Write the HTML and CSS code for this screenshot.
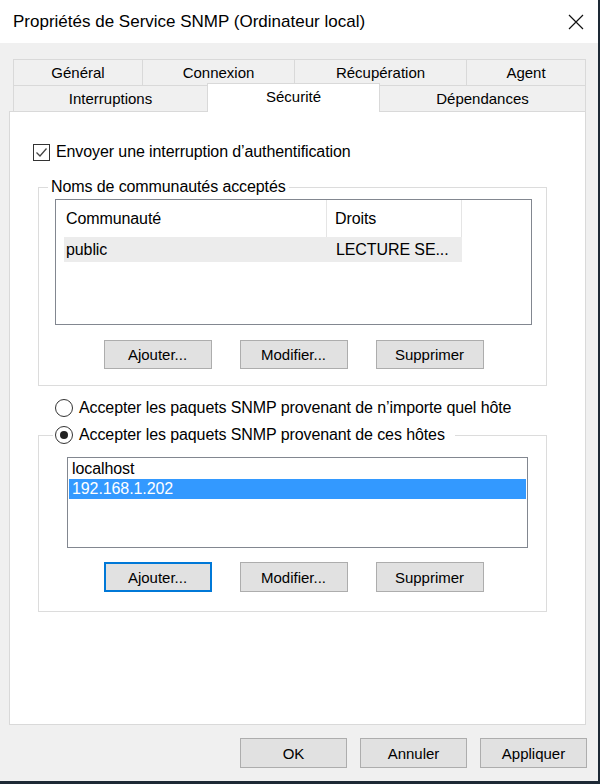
FILE: index.html
```html
<!DOCTYPE html>
<html lang="fr">
<head>
    <meta charset="UTF-8">
    <meta name="viewport" content="width=device-width, initial-scale=1.0">
    <title>Propriétés de Service SNMP</title>
    <link rel="stylesheet" href="styles.css">
</head>
<body>
    <div class="window">
        <div class="titlebar">
            <span class="title">Propriétés de Service SNMP (Ordinateur local)</span>
            <svg class="close" width="16" height="16" viewBox="0 0 16 16">
                <path d="M1 1L15 15M15 1L1 15" stroke="#111" stroke-width="1.2" fill="none"/>
            </svg>
        </div>

        <div class="content">
            <div class="tabs">
                <div class="tab-row back">
                    <div class="tab">Général</div>
                    <div class="tab">Connexion</div>
                    <div class="tab">Récupération</div>
                    <div class="tab">Agent</div>
                </div>
                <div class="tab-row front">
                    <div class="tab">Interruptions</div>
                    <div class="tab active">Sécurité</div>
                    <div class="tab">Dépendances</div>
                </div>
            </div>

            <div class="panel">
                <div class="check-row">
                    <span class="checkbox">
                        <svg width="15" height="15" viewBox="0 0 15 15">
                            <path d="M2.5 7.5L6 11L12.5 3.5" stroke="#444" stroke-width="1.3" fill="none"/>
                        </svg>
                    </span>
                    Envoyer une interruption d’authentification
                </div>

                <fieldset class="group communities">
                    <legend>Noms de communautés acceptés</legend>
                    <div class="listview">
                        <div class="lv-header">
                            <div class="col c1">Communauté</div>
                            <div class="col c2">Droits</div>
                        </div>
                        <div class="lv-row selected">
                            <div class="col c1">public</div>
                            <div class="col c2">LECTURE SE...</div>
                        </div>
                    </div>
                    <div class="btn-row">
                        <button>Ajouter...</button>
                        <button>Modifier...</button>
                        <button>Supprimer</button>
                    </div>
                </fieldset>

                <div class="radio-row">
                    <span class="radio"></span>
                    Accepter les paquets SNMP provenant de n’importe quel hôte
                </div>

                <fieldset class="group hosts">
                    <legend><span class="radio on"></span>Accepter les paquets SNMP provenant de ces hôtes</legend>
                    <div class="listbox">
                        <div class="item">localhost</div>
                        <div class="item sel">192.168.1.202</div>
                    </div>
                    <div class="btn-row">
                        <button class="focused">Ajouter...</button>
                        <button>Modifier...</button>
                        <button>Supprimer</button>
                    </div>
                </fieldset>
            </div>

            <div class="dialog-buttons">
                <button>OK</button>
                <button>Annuler</button>
                <button>Appliquer</button>
            </div>
        </div>
    </div>
</body>
</html>
```

FILE: styles.css
```css
* {
    margin: 0;
    padding: 0;
    box-sizing: border-box;
    font-family: 'Liberation Sans', Arial, sans-serif;
}

body {
    background-color: #f0f0f0;
    color: #000;
    width: 600px;
    height: 784px;
    overflow: hidden;
}

.window {
    height: 784px;
    border-right: 2px solid #1d2935;
    border-bottom: 3px solid #1d2935;
    background: #f0f0f0;
}

/* barre de titre */
.titlebar {
    height: 43px;
    background: #fff;
    display: flex;
    align-items: center;
    justify-content: space-between;
    padding: 0 14px 0 13px;
}
.titlebar .title {
    font-size: 17px;
    margin-top: 1px;
}
.close {
    margin-top: 1px;
}

.content {
    padding: 16px 12px 0 9px;
}

/* onglets */
.tabs {
    margin-left: 4px;
    font-size: 15px;
}
.tab-row {
    display: grid;
    height: 26px;
}
.tab-row.back {
    grid-template-columns: 129px 152px 172px 120px;
}
.tab-row.front {
    grid-template-columns: 194px 173px 206px;
}
.tab {
    background: #f0f0f0;
    border-top: 1px solid #d9d9d9;
    border-left: 1px solid #d9d9d9;
    text-align: center;
    line-height: 25px;
}
.tab:last-child {
    border-right: 1px solid #d9d9d9;
}
.tab.active {
    background: #fff;
    border-right: 1px solid #d9d9d9;
    margin-top: -2px;
    margin-bottom: -1px;
    line-height: 25px;
    position: relative;
    z-index: 1;
}
.tab.active + .tab {
    border-left: none;
}

.panel {
    height: 614px;
    background: #fff;
    border: 1px solid #d9d9d9;
    padding-top: 30px;
    font-size: 16px;
    letter-spacing: -0.1px;
}

/* case a cocher */
.check-row {
    display: flex;
    align-items: center;
    height: 20px;
    margin-left: 23px;
}
.checkbox {
    width: 17px;
    height: 17px;
    border: 1px solid #333;
    background: #fff;
    margin-right: 6px;
    display: flex;
    align-items: center;
    justify-content: center;
}

/* cadres */
.group {
    margin-left: 28px;
    width: 509px;
    border: 1px solid #dcdcdc;
    padding: 2px 14px 16px 16px;
}
.group legend {
    height: 20px;
    line-height: 20px;
    margin-left: -7px;
    padding: 0 3px;
}
.communities {
    margin-top: 15px;
}

.listview {
    height: 126px;
    border: 1px solid #828790;
}
.lv-header {
    display: flex;
    height: 37px;
    line-height: 37px;
}
.lv-header .c1 {
    width: 271px;
    padding-left: 10px;
    border-right: 1px solid #e5e5e5;
}
.lv-header .c2 {
    width: 135px;
    padding-left: 8px;
    border-right: 1px solid #e5e5e5;
}
.lv-row {
    display: flex;
    margin-left: 8px;
    width: 398px;
    height: 25px;
    line-height: 26px;
}
.lv-row.selected {
    background: #ececec;
}
.lv-row .c1 {
    width: 263px;
    padding-left: 2px;
}
.lv-row .c2 {
    width: 135px;
    padding-left: 9px;
}

.btn-row {
    display: flex;
    justify-content: center;
    gap: 28px;
    margin-top: 15px;
}

button {
    width: 108px;
    height: 29px;
    background: #e1e1e1;
    border: 1px solid #adadad;
    font-size: 15px;
    color: #000;
}
button.focused {
    border: 2px solid #0078d7;
}

/* boutons radio */
.radio-row {
    display: flex;
    align-items: center;
    height: 20px;
    margin: 12px 0 0 45px;
}
.radio {
    display: inline-block;
    flex: none;
    width: 18px;
    height: 18px;
    border: 1px solid #333;
    border-radius: 50%;
    background: #fff;
    margin-right: 6px;
    position: relative;
}
.radio.on::after {
    content: "";
    position: absolute;
    left: 4px;
    top: 4px;
    width: 8px;
    height: 8px;
    border-radius: 50%;
    background: #222;
}

.hosts {
    margin-top: 7px;
    padding-bottom: 19px;
}
.hosts legend {
    margin-left: -2px;
    padding: 0 10px 0 2px;
    display: flex;
    align-items: center;
}
.hosts .btn-row {
    margin-top: 14px;
}
.hosts button {
    height: 30px;
}

.listbox {
    margin-top: 10px;
    margin-left: 12px;
    width: 461px;
    height: 91px;
    border: 1px solid #828790;
    padding: 1px 1px 0 1px;
}
.listbox .item {
    height: 20px;
    line-height: 20px;
    padding-left: 3px;
}
.listbox .item.sel {
    background: #3399ff;
    color: #fff;
}

/* boutons du bas */
.dialog-buttons {
    display: flex;
    justify-content: flex-end;
    gap: 13px;
    margin-top: 13px;
    margin-right: -1px;
}
.dialog-buttons button {
    width: 107px;
    height: 30px;
}
```
